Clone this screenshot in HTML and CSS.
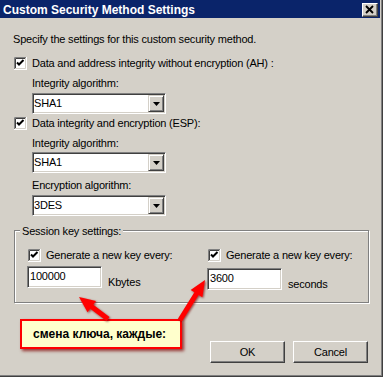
FILE: index.html
```html
<!DOCTYPE html>
<html>
<head>
    <meta charset="UTF-8">
    <title>Custom Security Method Settings</title>
    <link rel="stylesheet" href="styles.css">
</head>
<body>
    <div class="window">
        <div class="titlebar">
            <span class="title">Custom Security Method Settings</span>
            <span class="close">
                <svg width="14" height="12" viewBox="0 0 14 12"><path d="M3 2L10 9M10 2L3 9" stroke="#000" stroke-width="1.9" fill="none"/></svg>
            </span>
        </div>

        <div class="content">
            <p class="intro">Specify the settings for this custom security method.</p>

            <div class="opt opt-ah">
                <svg class="cb" width="13" height="13" viewBox="0 0 13 13"><rect width="13" height="13" fill="#fff"/><path class="s1" d="M.5 12V.5H12"/><path class="s2" d="M1.5 11V1.5H11"/><path class="s3" d="M0 12.5h12.5V0"/><path class="s4" d="M1 11.5h10.5V1"/><path class="tick" d="M3 5.5L5 7.5L9.5 3"/></svg>
                <span>Data and address integrity without encryption (AH) :</span>
            </div>
            <div class="sub">
                <div class="field-label lbl-1">Integrity algorithm:</div>
                <div class="select sel-1">
                    <span class="value">SHA1</span>
                    <span class="drop"><svg width="7" height="4" viewBox="0 0 7 4"><path d="M0 0h7L3.5 4z" fill="#000"/></svg></span>
                </div>
            </div>

            <div class="opt opt-esp">
                <svg class="cb" width="13" height="13" viewBox="0 0 13 13"><rect width="13" height="13" fill="#fff"/><path class="s1" d="M.5 12V.5H12"/><path class="s2" d="M1.5 11V1.5H11"/><path class="s3" d="M0 12.5h12.5V0"/><path class="s4" d="M1 11.5h10.5V1"/><path class="tick" d="M3 5.5L5 7.5L9.5 3"/></svg>
                <span>Data integrity and encryption (ESP):</span>
            </div>
            <div class="sub">
                <div class="field-label lbl-2">Integrity algorithm:</div>
                <div class="select sel-2">
                    <span class="value">SHA1</span>
                    <span class="drop"><svg width="7" height="4" viewBox="0 0 7 4"><path d="M0 0h7L3.5 4z" fill="#000"/></svg></span>
                </div>
                <div class="field-label lbl-3">Encryption algorithm:</div>
                <div class="select sel-3">
                    <span class="value">3DES</span>
                    <span class="drop"><svg width="7" height="4" viewBox="0 0 7 4"><path d="M0 0h7L3.5 4z" fill="#000"/></svg></span>
                </div>
            </div>

            <div class="group">
                <span class="legend">Session key settings:</span>
                <div class="col col-a">
                    <div class="opt">
                        <svg class="cb" width="13" height="13" viewBox="0 0 13 13"><rect width="13" height="13" fill="#fff"/><path class="s1" d="M.5 12V.5H12"/><path class="s2" d="M1.5 11V1.5H11"/><path class="s3" d="M0 12.5h12.5V0"/><path class="s4" d="M1 11.5h10.5V1"/><path class="tick" d="M3 5.5L5 7.5L9.5 3"/></svg>
                        <span>Generate a new key every:</span>
                    </div>
                    <div class="field-row">
                        <div class="textbox">100000</div>
                        <span class="unit">Kbytes</span>
                    </div>
                </div>
                <div class="col col-b">
                    <div class="opt">
                        <svg class="cb" width="13" height="13" viewBox="0 0 13 13"><rect width="13" height="13" fill="#fff"/><path class="s1" d="M.5 12V.5H12"/><path class="s2" d="M1.5 11V1.5H11"/><path class="s3" d="M0 12.5h12.5V0"/><path class="s4" d="M1 11.5h10.5V1"/><path class="tick" d="M3 5.5L5 7.5L9.5 3"/></svg>
                        <span>Generate a new key every:</span>
                    </div>
                    <div class="field-row">
                        <div class="textbox">3600</div>
                        <span class="unit">seconds</span>
                    </div>
                </div>
            </div>

            <div class="buttons">
                <button class="btn">OK</button>
                <button class="btn">Cancel</button>
            </div>
        </div>

        <!-- annotation on top of the dialog -->
        <div class="callout">смена ключа, каждые:</div>
        <svg class="arrows" width="383" height="377" viewBox="0 0 383 377">
            <defs>
                <filter id="shade" x="-20%" y="-20%" width="140%" height="140%">
                    <feDropShadow dx="1" dy="1" stdDeviation="0.8" flood-color="#700" flood-opacity="0.7"/>
                </filter>
            </defs>
            <g fill="#f00" filter="url(#shade)">
                <polygon points="79,297 96,301.1 93.3,304.7 109.5,317 106.5,321 90.2,308.7 87.5,312.2"/>
                <polygon points="205,280 190.6,289.9 194.4,292.3 177.9,318.7 182.1,321.3 198.6,294.9 202.4,297.3"/>
            </g>
        </svg>
    </div>
</body>
</html>
```

FILE: styles.css
```css
html, body {
    margin: 0;
    overflow: hidden;
}

body {
    font-family: "Liberation Sans", Arial, sans-serif;
    font-size: 11px;
    letter-spacing: -0.2px;
    color: #000;
    background: #fff;
}

.window {
    position: relative;
    width: 383px;
    height: 377px;
    box-sizing: border-box;
    padding-right: 2px;
    background: #d4d0c8;
    border-right: 1px solid #404040;
    border-bottom: 1px solid #404040;
    box-shadow: inset -1px -1px 0 #808080;
}

.titlebar {
    height: 18px;
    background: #0a246a;
    display: flex;
    justify-content: space-between;
    align-items: flex-start;
    padding: 0 2px 0 3px;
}

.title {
    color: #fff;
    font-weight: bold;
    font-size: 12px;
    letter-spacing: 0;
    line-height: 18px;
    padding-top: 1px;
}

.close {
    width: 16px;
    height: 14px;
    margin-top: 3px;
    box-sizing: border-box;
    border: 1px solid;
    border-color: #fff #404040 #404040 #fff;
    box-shadow: inset -1px -1px 0 #808080;
    background: #d4d0c8;
}

.close svg {
    display: block;
}

.content {
    padding: 0 11px 0 13px;
}

.intro {
    margin: 14px 0 0;
    line-height: 14px;
}

.opt {
    display: flex;
    align-items: center;
    gap: 5px;
    height: 14px;
    line-height: 14px;
    white-space: nowrap;
}

.cb {
    display: block;
    margin-left: 1px;
    flex: none;
}

.cb path {
    fill: none;
}

.cb .s1 { stroke: #808080; }
.cb .s2 { stroke: #404040; }
.cb .s3 { stroke: #fff; }
.cb .s4 { stroke: #d4d0c8; }

.cb .tick {
    stroke: #000;
    stroke-width: 2;
}

.opt-ah { margin-top: 10px; }
.opt-esp { margin-top: 2px; }

.sub {
    margin-left: 19px;
}

.field-label {
    line-height: 14px;
}

.lbl-1 { margin-top: 6px; }
.lbl-2 { margin-top: 6px; }
.lbl-3 { margin-top: 5px; }

.select {
    width: 134px;
    height: 21px;
    box-sizing: border-box;
    border: 1px solid;
    border-color: #808080 #fff #fff #808080;
    box-shadow: inset 1px 1px 0 #404040, inset -1px -1px 0 #d4d0c8;
    background: #fff;
    padding: 1px;
    display: flex;
    align-items: center;
}

.sel-1 { margin-top: 3px; }
.sel-2 { margin-top: 2px; }
.sel-3 { margin-top: 3px; }

.select .value {
    flex: 1;
    line-height: 17px;
}

.drop {
    width: 16px;
    height: 17px;
    box-sizing: border-box;
    border: 1px solid;
    border-color: #d4d0c8 #404040 #404040 #d4d0c8;
    box-shadow: inset 1px 1px 0 #fff, inset -1px -1px 0 #808080;
    background: #d4d0c8;
    display: flex;
    align-items: center;
    justify-content: center;
}

.drop svg {
    display: block;
}

.group {
    position: relative;
    margin: 14px 0 0 1px;
    border: 1px solid #808080;
    box-shadow: inset 1px 1px 0 #fff, 1px 1px 0 #fff;
    padding: 17px 0 12px 12px;
    display: flex;
}

.legend {
    position: absolute;
    top: -7px;
    left: 5px;
    padding: 0 2px;
    line-height: 14px;
    background: #d4d0c8;
}

.col-a {
    width: 180px;
}

.field-row {
    display: flex;
    align-items: flex-end;
    gap: 6px;
}

.col-a .field-row { margin-top: 4px; }
.col-b .field-row { margin-top: 6px; }

.textbox {
    width: 75px;
    height: 22px;
    box-sizing: border-box;
    border: 1px solid;
    border-color: #808080 #fff #fff #808080;
    box-shadow: inset 1px 1px 0 #404040, inset -1px -1px 0 #d4d0c8;
    background: #fff;
    padding: 2px 2px;
    line-height: 14px;
}

.unit {
    line-height: 14px;
    margin-bottom: -1px;
}

.buttons {
    display: flex;
    justify-content: flex-end;
    gap: 8px;
    margin: 38px 1px 0 0;
}

.btn {
    width: 75px;
    height: 22px;
    box-sizing: border-box;
    border: 1px solid;
    border-color: #fff #404040 #404040 #fff;
    box-shadow: inset -1px -1px 0 #808080;
    background: #d4d0c8;
    font: inherit;
    letter-spacing: inherit;
    color: #000;
    padding: 0;
}

.callout {
    position: absolute;
    left: 20px;
    top: 319px;
    width: 162px;
    height: 30px;
    box-sizing: border-box;
    border: 2px solid #f00;
    background: #ffffcc;
    box-shadow: 2px 2px 3px rgba(128, 0, 0, 0.75);
    padding-left: 11px;
    font-weight: bold;
    font-size: 12px;
    letter-spacing: 0;
    line-height: 26px;
    white-space: nowrap;
}

.arrows {
    position: absolute;
    left: 0;
    top: 0;
    pointer-events: none;
}
```
